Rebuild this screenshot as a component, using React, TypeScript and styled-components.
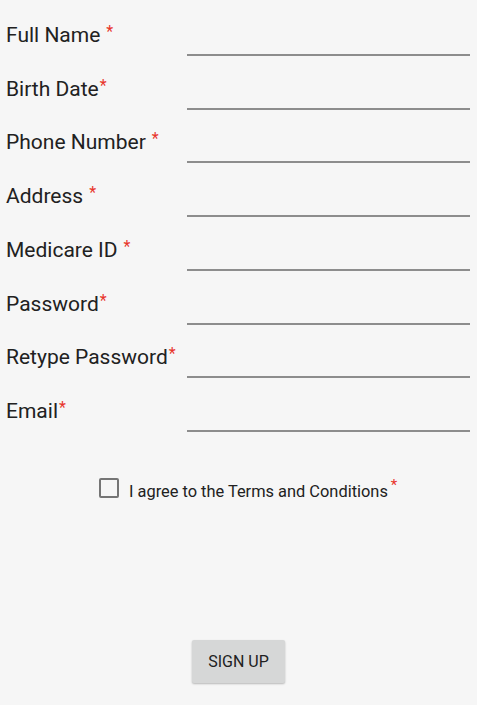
import React from "react";
import styled, { createGlobalStyle } from "styled-components";

const Global = createGlobalStyle`
  html, body { margin: 0; padding: 0; background: #f6f6f6; }
  body { font-family: Roboto, "Noto Sans", "Liberation Sans", sans-serif; color: #212121; }
`;

const Page = styled.div`
  width: 477px;
  height: 705px;
  display: flex;
  flex-direction: column;
  background: #f6f6f6;
`;

const Form = styled.div`
  display: flex;
  flex-direction: column;
  padding-top: 2px;
`;

const Row = styled.div`
  display: grid;
  grid-template-columns: 181px 1fr;
  height: 53.75px;
  padding: 0 7px 0 6px;
`;

const Label = styled.div`
  align-self: end;
  margin-bottom: 9px;
  font-size: 21px;
  line-height: 24px;
  color: #212121;
  white-space: nowrap;
`;

const Star = styled.span<{ $gap?: boolean }>`
  color: #e8342a;
  font-size: 16px;
  vertical-align: 5px;
  margin-left: ${(p) => (p.$gap ? "6px" : "1px")};
`;

const Field = styled.div`
  align-self: end;
  height: 2px;
  background: #8d8d8d;
`;

const AgreeRow = styled.label`
  display: flex;
  align-items: center;
  margin-top: 46px;
  padding-left: 99px;
  height: 20px;
`;

const Box = styled.span`
  width: 20px;
  height: 20px;
  box-sizing: border-box;
  border: 2px solid #757575;
  border-radius: 2px;
`;

const AgreeText = styled.span`
  margin-left: 10px;
  font-size: 16.4px;
  line-height: 20px;
  color: #212121;
  white-space: nowrap;
`;

const SmallStar = styled.span`
  color: #e8342a;
  font-size: 15px;
  vertical-align: 7px;
  margin-left: 3px;
`;

const ButtonWrap = styled.div`
  display: flex;
  justify-content: center;
  margin-top: 142px;
`;

const Button = styled.button`
  width: 93px;
  height: 43px;
  border: none;
  border-radius: 2px;
  background: #d6d7d7;
  box-shadow: 0 1px 2px rgba(0, 0, 0, 0.25);
  font-family: Roboto, "Liberation Sans", sans-serif;
  font-size: 16px;
  font-weight: 400;
  color: #212121;
  padding: 0;
`;

const fields: { label: string; gap: boolean }[] = [
  { label: "Full Name", gap: true },
  { label: "Birth Date", gap: false },
  { label: "Phone Number", gap: true },
  { label: "Address", gap: true },
  { label: "Medicare ID", gap: true },
  { label: "Password", gap: false },
  { label: "Retype Password", gap: false },
  { label: "Email", gap: false },
];

export default function App() {
  return (
    <Page>
      <Global />
      <Form>
        {fields.map((f) => (
          <Row key={f.label}>
            <Label>
              {f.label}
              <Star $gap={f.gap}>*</Star>
            </Label>
            <Field />
          </Row>
        ))}
      </Form>
      <AgreeRow>
        <Box />
        <AgreeText>
          I agree to the Terms and Conditions
          <SmallStar>*</SmallStar>
        </AgreeText>
      </AgreeRow>
      <ButtonWrap>
        <Button>SIGN UP</Button>
      </ButtonWrap>
    </Page>
  );
}
